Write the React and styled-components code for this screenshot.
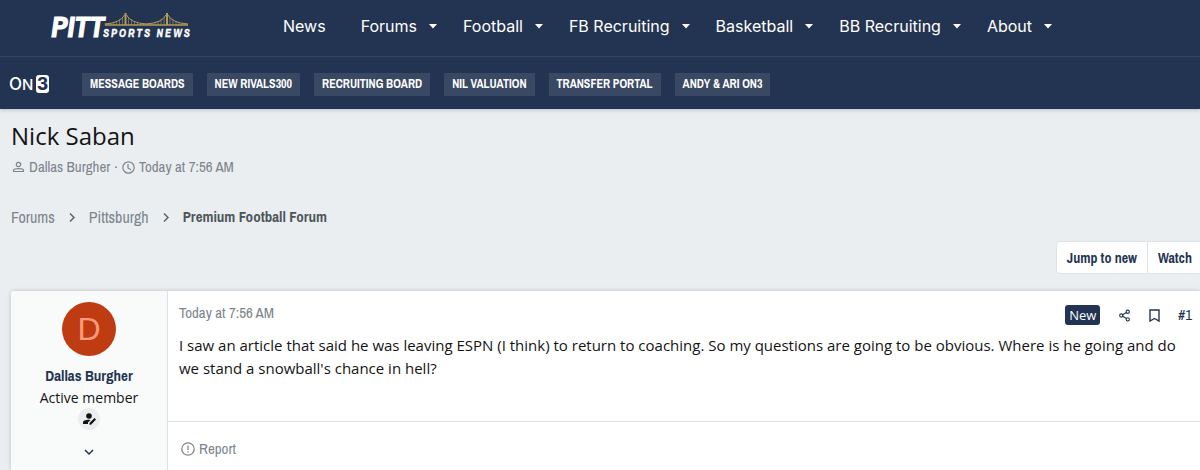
import { FiShare2 } from "react-icons/fi";
import styled, { createGlobalStyle, css } from "styled-components";

const narrow = css`
  font-family: "Liberation Sans Narrow", "Archivo Narrow", "Liberation Sans", sans-serif;
`;

const navItems = [
  { text: "News", menu: false },
  { text: "Forums", menu: true },
  { text: "Football", menu: true },
  { text: "FB Recruiting", menu: true },
  { text: "Basketball", menu: true },
  { text: "BB Recruiting", menu: true },
  { text: "About", menu: true },
];

const quickLinks = [
  "MESSAGE BOARDS",
  "NEW RIVALS300",
  "RECRUITING BOARD",
  "NIL VALUATION",
  "TRANSFER PORTAL",
  "ANDY & ARI ON3",
];

// suspender cables, hung from the main cable down to the deck
const cables = [-18, -15, -12, -9, -6, -3, 3, 6, 9, 12, 15, 18];

function SiteLogo() {
  return (
    <svg width="148" height="44" viewBox="0 -8 148 44" role="img" aria-label="Pitt Sports News">
      <g fill="none" stroke="#b39a55">
        {[75.5, 117].map((tower) => (
          <g key={tower}>
            <path
              d={`M${tower - 21} 12Q${tower - 5} 11 ${tower - 1} 3M${tower + 1} 3Q${tower + 5} 11 ${tower + 21} 12`}
            />
            <path d={`M${tower} 1V13`} strokeWidth="2" />
            {cables.map((x) => (
              <path
                key={x}
                d={`M${tower + x} ${12 - 9 * (1 - Math.abs(x) / 21) ** 2}V13`}
                strokeOpacity="0.6"
              />
            ))}
          </g>
        ))}
        <path d="M55 13H138" strokeWidth="1.5" />
      </g>
      <LogoText x="1" y="25" $size={30}>
        PITT
      </LogoText>
      <LogoText x="53" y="25" $size={11} $tracked>
        SPORTS NEWS
      </LogoText>
    </svg>
  );
}

function On3Logo() {
  return (
    <svg width="40" height="26" viewBox="0 -4 40 26" role="img" aria-label="On3">
      <rect x="27" y="0" width="13" height="18" rx="3" fill="#fff" />
      <On3Text x="0" y="15" $size={17}>
        O
      </On3Text>
      <On3Text x="13" y="15" $size={15}>
        N
      </On3Text>
      <On3Text x="28" y="15" $size={17} $dark>
        3
      </On3Text>
    </svg>
  );
}

function CrumbArrow() {
  return (
    <svg width="6" height="9" viewBox="0 0 6 9" fill="none" stroke="#5d6468" strokeWidth="1.5" aria-hidden="true">
      <path d="M1 0.500L5 4.500L1 8.500" />
    </svg>
  );
}

function App() {
  return (
    <>
      <GlobalStyle />
      <Header>
        <NavBar>
          <LogoLink href="#home">
            <SiteLogo />
          </LogoLink>
          <NavList>
            {navItems.map((item) => (
              <NavItem key={item.text}>
                <a href="#nav">{item.text}</a>
                {item.menu && (
                  <CaretButton aria-label={`${item.text} menu`}>
                    <svg width="8" height="5" viewBox="0 0 8 5">
                      <path d="M0 0H8L4 4.500Z" fill="currentColor" />
                    </svg>
                  </CaretButton>
                )}
              </NavItem>
            ))}
          </NavList>
        </NavBar>
        <QuickBar>
          <On3Link href="#on3">
            <On3Logo />
          </On3Link>
          {quickLinks.map((text) => (
            <QuickLink key={text} href="#link">
              {text}
            </QuickLink>
          ))}
        </QuickBar>
      </Header>

      <Main>
        <Title>Nick Saban</Title>
        <Meta>
          <svg width="14" height="12" viewBox="0 0 14 12" fill="none" stroke="currentColor" strokeWidth="1.2">
            <circle cx="7.500" cy="3.500" r="2.200" />
            <path d="M2.500 10.500V9.500C2.500 7 12.500 7 12.500 9.500V10.500Z" />
          </svg>
          <a href="#user">Dallas Burgher</a>
          <span>·</span>
          <svg width="13" height="13" viewBox="0 0 13 13" fill="none" stroke="currentColor" strokeWidth="1.200">
            <circle cx="6.500" cy="6.500" r="5.700" />
            <path d="M6 3V7L9 8.800" />
          </svg>
          <a href="#time">Today at 7:56 AM</a>
        </Meta>

        <Breadcrumbs aria-label="Breadcrumb">
          <a href="#forums">Forums</a>
          <CrumbArrow />
          <a href="#pittsburgh">Pittsburgh</a>
          <CrumbArrow />
          <CurrentCrumb href="#premium">Premium Football Forum</CurrentCrumb>
        </Breadcrumbs>

        <Actions>
          <ActionButton>Jump to new</ActionButton>
          <ActionButton>Watch</ActionButton>
        </Actions>

        <Post>
          <UserCell>
            <Avatar>D</Avatar>
            <UserName href="#user">Dallas Burgher</UserName>
            <UserTitle>Active member</UserTitle>
            <AuthorBadge>
              <svg width="13" height="12" viewBox="0 0 13 12" fill="#111">
                <circle cx="6" cy="3" r="2.800" />
                <path d="M0 11V9.500C0 7.500 3 6.500 7.500 7L5 9.500V11Z" />
                <path d="M6.500 11.800V10L11.500 5L13 6.500L8 11.800Z" />
              </svg>
            </AuthorBadge>
            <ExpandButton aria-label="Show user details">
              <svg width="10" height="6" viewBox="0 0 10 6" fill="none" stroke="#233452" strokeWidth="1.500">
                <path d="M1 1L5 5L9 1" />
              </svg>
            </ExpandButton>
          </UserCell>
          <PostCell>
            <PostHeader>
              <PostDate href="#time">Today at 7:56 AM</PostDate>
              <PostTools>
                <NewBadge>New</NewBadge>
                <IconButton aria-label="Share">
                  <FiShare2 size={13} />
                </IconButton>
                <IconButton aria-label="Add bookmark">
                  <svg width="11" height="13" viewBox="0 0 11 13" fill="none" stroke="currentColor" strokeWidth="1.400">
                    <path d="M1 1H10V12L5.500 9.500L1 12Z" />
                  </svg>
                </IconButton>
                <PostNumber href="#post-1">#1</PostNumber>
              </PostTools>
            </PostHeader>
            <Message>
              I saw an article that said he was leaving ESPN (I think) to return to coaching. So my
              questions are going to be obvious. Where is he going and do we stand a snowball's
              chance in hell?
            </Message>
            <PostFooter>
              <ReportButton>
                <svg width="14" height="14" viewBox="0 0 14 14" fill="none" stroke="currentColor" strokeWidth="1.200">
                  <circle cx="7" cy="7" r="6.200" />
                  <path d="M7 3.500V8M7 9.200V10.500" />
                </svg>
                Report
              </ReportButton>
            </PostFooter>
          </PostCell>
        </Post>
      </Main>
    </>
  );
}

const GlobalStyle = createGlobalStyle`
  * {
    box-sizing: border-box;
  }
  body {
    margin: 0;
    overflow-x: hidden;
    background: #ebeef1;
    color: #141414;
    font-family: "Open Sans", "Noto Sans", sans-serif;
  }
  a {
    color: inherit;
    text-decoration: none;
  }
  button {
    border: 0;
    padding: 0;
    background: none;
    color: inherit;
    font: inherit;
    cursor: pointer;
  }
  svg {
    display: block;
    flex-shrink: 0;
    overflow: visible;
  }
`;

const LogoText = styled.text`
  ${narrow}
  fill: #fff;
  stroke: #fff;
  stroke-width: ${({ $tracked }) => ($tracked ? "0.3px" : "1px")};
  font-size: ${({ $size }) => $size}px;
  font-style: italic;
  font-weight: 700;
  ${({ $tracked }) =>
    $tracked &&
    css`
      letter-spacing: 2px;
    `}
`;

const On3Text = styled.text`
  fill: ${({ $dark }) => ($dark ? "#233452" : "#fff")};
  font-family: Inter, sans-serif;
  font-size: ${({ $size }) => $size}px;
  font-weight: ${({ $dark }) => ($dark ? 800 : 500)};
`;

const Header = styled.header`
  background: #233452;
  color: #fff;
  box-shadow: 0 1px 4px rgba(35, 52, 82, 0.25);
`;

const NavBar = styled.div`
  display: flex;
  align-items: center;
  height: 57px;
  padding: 0 50px 4px;
  border-bottom: 1px solid #344563;
`;

const LogoLink = styled.a`
  margin-right: 85px;
`;

const NavList = styled.ul`
  display: flex;
  gap: 26px;
  margin: 0;
  padding: 0;
  list-style: none;
  font-family: Inter, sans-serif;
  font-size: 16px;
  white-space: nowrap;
`;

const NavItem = styled.li`
  display: flex;
  align-items: center;
  gap: 12px;
  &:first-child {
    margin-right: 9px;
  }
`;

const CaretButton = styled.button`
  width: 8px;
`;

const QuickBar = styled.nav`
  display: flex;
  align-items: center;
  gap: 14px;
  height: 52px;
  padding: 2px 9px 0;
`;

const On3Link = styled.a`
  margin-right: 19px;
`;

const QuickLink = styled.a`
  ${narrow}
  padding: 0 8px;
  background: #3a4963;
  font-size: 12px;
  font-weight: 700;
  line-height: 23px;
  white-space: nowrap;
`;

const Main = styled.main`
  padding: 11px 0 0 11px;
`;

const Title = styled.h1`
  margin: 0;
  font-size: 24px;
  font-weight: 400;
  line-height: 32px;
`;

const Meta = styled.div`
  ${narrow}
  display: flex;
  align-items: center;
  gap: 4px;
  margin-top: 5px;
  color: #7d858c;
  font-size: 15px;
  line-height: 20px;
`;

const Breadcrumbs = styled.nav`
  ${narrow}
  display: flex;
  align-items: center;
  gap: 14px;
  margin-top: 30px;
  color: #7d858c;
  font-size: 16px;
  line-height: 20px;
`;

const CurrentCrumb = styled.a`
  color: #4c5659;
  font-size: 15px;
  font-weight: 700;
`;

const Actions = styled.div`
  display: flex;
  justify-content: flex-end;
  margin-top: 14px;
`;

const ActionButton = styled.button`
  ${narrow}
  height: 33px;
  padding: 0 10px;
  border: 1px solid #dfe2e6;
  background: #fff;
  color: #233452;
  font-size: 14px;
  font-weight: 700;
  &:first-child {
    border-radius: 4px 0 0 4px;
  }
  &:last-child {
    padding-right: 8px;
    border-width: 1px 0;
  }
`;

const Post = styled.article`
  display: flex;
  margin-top: 17px;
  border-radius: 4px 0 0 0;
  background: #fff;
  box-shadow: 0 0 4px rgba(0, 0, 0, 0.2);
`;

const UserCell = styled.section`
  display: flex;
  flex: 0 0 157px;
  flex-direction: column;
  align-items: center;
  padding: 11px 0 8px;
  border-right: 1px solid #dfe2e5;
  border-radius: 4px 0 0 0;
  background: #f9fafa;
`;

const Avatar = styled.div`
  width: 54px;
  height: 54px;
  border-radius: 50%;
  background: #bf3c12;
  color: #ff9a7a;
  font-family: "Liberation Sans", sans-serif;
  font-size: 32px;
  line-height: 54px;
  text-align: center;
`;

const UserName = styled.a`
  ${narrow}
  margin-top: 9px;
  color: #233452;
  font-size: 15px;
  font-weight: 700;
  line-height: 22px;
`;

const UserTitle = styled.div`
  font-size: 14px;
  line-height: 21px;
`;

const AuthorBadge = styled.div`
  display: grid;
  place-items: center;
  width: 22px;
  height: 22px;
  border-radius: 50%;
  background: #ebedef;
`;

const ExpandButton = styled.button`
  display: grid;
  place-items: center;
  width: 20px;
  height: 20px;
  margin-top: 12px;
`;

const PostCell = styled.section`
  display: flex;
  flex: 1;
  flex-direction: column;
`;

const PostHeader = styled.header`
  display: flex;
  justify-content: space-between;
  padding: 12px 8px 0 11px;
  line-height: 20px;
`;

const PostDate = styled.a`
  ${narrow}
  color: #7d858c;
  font-size: 15px;
`;

const PostTools = styled.div`
  display: flex;
  align-items: center;
  gap: 18px;
  padding-top: 2px;
  color: #233452;
`;

const NewBadge = styled.span`
  padding: 0 4px;
  border-radius: 3px;
  background: #233452;
  color: #fff;
  font-size: 13px;
`;

const IconButton = styled.button`
  display: flex;
`;

const PostNumber = styled.a`
  ${narrow}
  font-size: 15px;
`;

const Message = styled.p`
  margin: 0;
  padding: 9px 11px 41px;
  font-size: 15px;
  line-height: 23px;
`;

const PostFooter = styled.footer`
  padding: 17px 13px 11px;
  border-top: 1px solid #dfe2e5;
`;

const ReportButton = styled.button`
  ${narrow}
  display: flex;
  align-items: center;
  gap: 4px;
  color: #7d858c;
  font-size: 15px;
  line-height: 20px;
`;

export default App;
